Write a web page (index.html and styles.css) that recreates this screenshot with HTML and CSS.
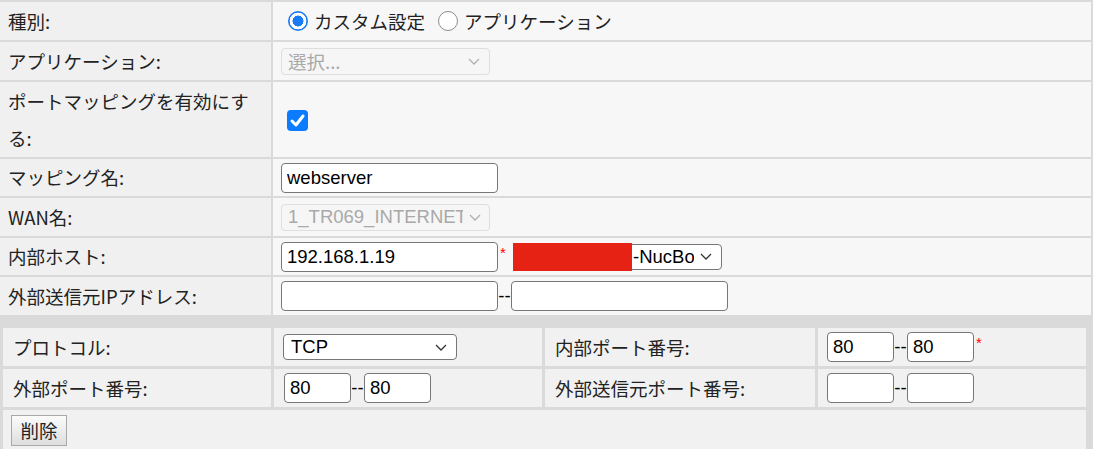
FILE: index.html
```
<!DOCTYPE html>
<html lang="ja">
<head>
<meta charset="utf-8">
<title>ポートマッピング</title>
<link rel="stylesheet" href="styles.css">
</head>
<body>
<div class="cfg">
  <div class="lab">種別:</div>
  <div class="val">
    <span class="radio"><span class="rb on"></span>カスタム設定</span>
    <span class="radio second"><span class="rb"></span>アプリケーション</span>
  </div>

  <div class="lab">アプリケーション:</div>
  <div class="val">
    <div class="sel dis app"><span class="seltxt">選択...</span><svg class="chev" viewBox="0 0 12 7"><polyline points="1,1 6,6 11,1"/></svg></div>
  </div>

  <div class="lab">ポートマッピングを有効にする:</div>
  <div class="val">
    <span class="chk"><svg viewBox="0 0 21 21"><polyline points="5,11 9,15 16,6"/></svg></span>
  </div>

  <div class="lab">マッピング名:</div>
  <div class="val"><input class="txt" type="text" value="webserver"></div>

  <div class="lab">WAN名:</div>
  <div class="val">
    <div class="sel dis wan"><span class="seltxt">1_TR069_INTERNET</span><svg class="chev" viewBox="0 0 12 7"><polyline points="1,1 6,6 11,1"/></svg></div>
  </div>

  <div class="lab">内部ホスト:</div>
  <div class="val">
    <input class="txt" type="text" value="192.168.1.19"><span class="req">*</span>
    <div class="sel host"><span class="redact"></span><span class="seltxt">-NucBo</span><svg class="chev" viewBox="0 0 12 7"><polyline points="1,1 6,6 11,1"/></svg></div>
  </div>

  <div class="lab">外部送信元IPアドレス:</div>
  <div class="val"><input class="txt" type="text" value=""><span class="dash">--</span><input class="txt" type="text" value=""></div>
</div>

<div class="ports">
  <div class="plab">プロトコル:</div>
  <div class="pval">
    <div class="sel proto"><span class="seltxt">TCP</span><svg class="chev" viewBox="0 0 12 7"><polyline points="1,1 6,6 11,1"/></svg></div>
  </div>
  <div class="plab">内部ポート番号:</div>
  <div class="pval"><input class="port" type="text" value="80"><span class="dash">--</span><input class="port" type="text" value="80"><span class="req">*</span></div>

  <div class="plab">外部ポート番号:</div>
  <div class="pval second"><input class="port" type="text" value="80"><span class="dash">--</span><input class="port" type="text" value="80"></div>
  <div class="plab">外部送信元ポート番号:</div>
  <div class="pval"><input class="port" type="text" value=""><span class="dash">--</span><input class="port" type="text" value=""></div>

  <div class="btnrow"><button class="btn" type="button">削除</button></div>
</div>
</body>
</html>
```
FILE: styles.css
```
html, body {
  margin: 0;
  padding: 0;
}
body {
  background: #dadada;
  width: 1093px;
  height: 449px;
  overflow: hidden;
  font-family: "Noto Sans CJK JP", "Liberation Sans", sans-serif;
  font-size: 18.5px;
  color: #222;
}

.cfg {
  width: 1091px;
  display: grid;
  grid-template-columns: 271px 818px;
  grid-template-rows: 38px 38px 75px 37px 38px 37px 38px;
  gap: 2px;
  padding-top: 2px;
}
.lab {
  background: #f0f0f0;
  padding: 0 12px 0 8px;
  display: flex;
  align-items: center;
  line-height: 37px;
}
.val {
  background: #f7f7f7;
  padding-left: 8px;
  display: flex;
  align-items: center;
}

.radio {
  display: inline-flex;
  align-items: center;
  margin-left: 7px;
  white-space: nowrap;
}
.radio.second {
  margin-left: 13px;
}
.rb {
  width: 20px;
  height: 20px;
  box-sizing: border-box;
  border-radius: 50%;
  border: 1px solid #8c8c8c;
  background: #fff;
  margin-right: 6px;
}
.rb.on {
  border: none;
  background: radial-gradient(circle, #1a7bf4 0 38%, #fff 40% 58%, #1a7bf4 61%);
}

.chk {
  margin-left: 6px;
  width: 21px;
  height: 21px;
  border-radius: 4px;
  background: #0b7bff;
  display: inline-flex;
  margin-top: 2px;
}
.chk svg {
  width: 21px;
  height: 21px;
}
.chk polyline {
  fill: none;
  stroke: #fff;
  stroke-width: 3;
  stroke-linecap: round;
  stroke-linejoin: round;
}

.txt, .port {
  box-sizing: border-box;
  height: 30px;
  border: 1px solid #777;
  border-radius: 4px;
  background: #fff;
  font-family: "Liberation Sans", sans-serif;
  font-size: 18.5px;
  color: #000;
  padding: 0 5px;
  margin: 0;
  outline: none;
}
.txt {
  width: 217px;
}
.port {
  width: 67px;
}
.dash {
  font-family: "Liberation Sans", sans-serif;
  font-size: 18.5px;
  color: #000;
  width: 13px;
  text-align: center;
}
.req {
  color: #ff0000;
  font-family: "Liberation Sans", sans-serif;
  font-size: 15px;
  align-self: flex-start;
  margin-top: 6px;
  width: 15px;
  padding-left: 2px;
  box-sizing: border-box;
}

.sel {
  box-sizing: border-box;
  display: flex;
  align-items: center;
  border: 1px solid #777;
  border-radius: 4px;
  background: #fff;
  font-family: "Liberation Sans", "Noto Sans CJK JP", sans-serif;
  font-size: 18.5px;
  color: #000;
  position: relative;
}
.seltxt {
  flex: 1;
  overflow: hidden;
  white-space: nowrap;
  padding-left: 6px;
}
.chev {
  width: 12px;
  height: 7px;
  margin: 0 9px 0 6px;
  flex: none;
}
.chev polyline {
  fill: none;
  stroke: #333;
  stroke-width: 1.3;
}
.sel.dis {
  width: 209px;
  height: 27px;
  border-color: #dedede;
  background: #f6f6f6;
  color: #a9a9a9;
}
.sel.dis .chev polyline {
  stroke: #b0b0b0;
}
.sel.app .seltxt {
  font-family: "Noto Sans CJK JP", sans-serif;
}
.sel.wan .seltxt {
  flex: none;
  width: 175px;
  margin-right: 0;
}
.sel.host {
  width: 209px;
  height: 26px;
  margin-left: 0;
}
.sel.host .seltxt {
  padding-left: 0;
}
.redact {
  width: 119px;
  height: 28px;
  margin: -2px 1px -2px -1px;
  background: #e52214;
  flex: none;
}
.sel.proto {
  width: 174px;
  height: 26px;
}
.sel.proto .seltxt {
  padding-left: 7px;
}

.ports {
  width: 1083px;
  margin-top: 10px;
  padding: 3px;
  display: grid;
  grid-template-columns: 268px 268px 270px 268px;
  grid-template-rows: 38px 38px 40px;
  gap: 3px;
}
.plab {
  background: #f1f1f1;
  padding-left: 10px;
  display: flex;
  align-items: center;
}
.pval {
  background: #f1f1f1;
  padding-left: 9px;
  display: flex;
  align-items: center;
}
.pval.second {
  padding-left: 10px;
}
.btnrow {
  grid-column: 1 / -1;
  background: #f1f1f1;
  padding: 5px 0 0 8px;
}
.btn {
  width: 56px;
  height: 31px;
  margin: 0;
  padding: 0;
  border: 1px solid #a8a8a8;
  border-radius: 0;
  background: linear-gradient(#fbfbfb, #dedede);
  font-family: "Noto Sans CJK JP", sans-serif;
  font-size: 18.5px;
  color: #222;
  line-height: 29px;
}
```
